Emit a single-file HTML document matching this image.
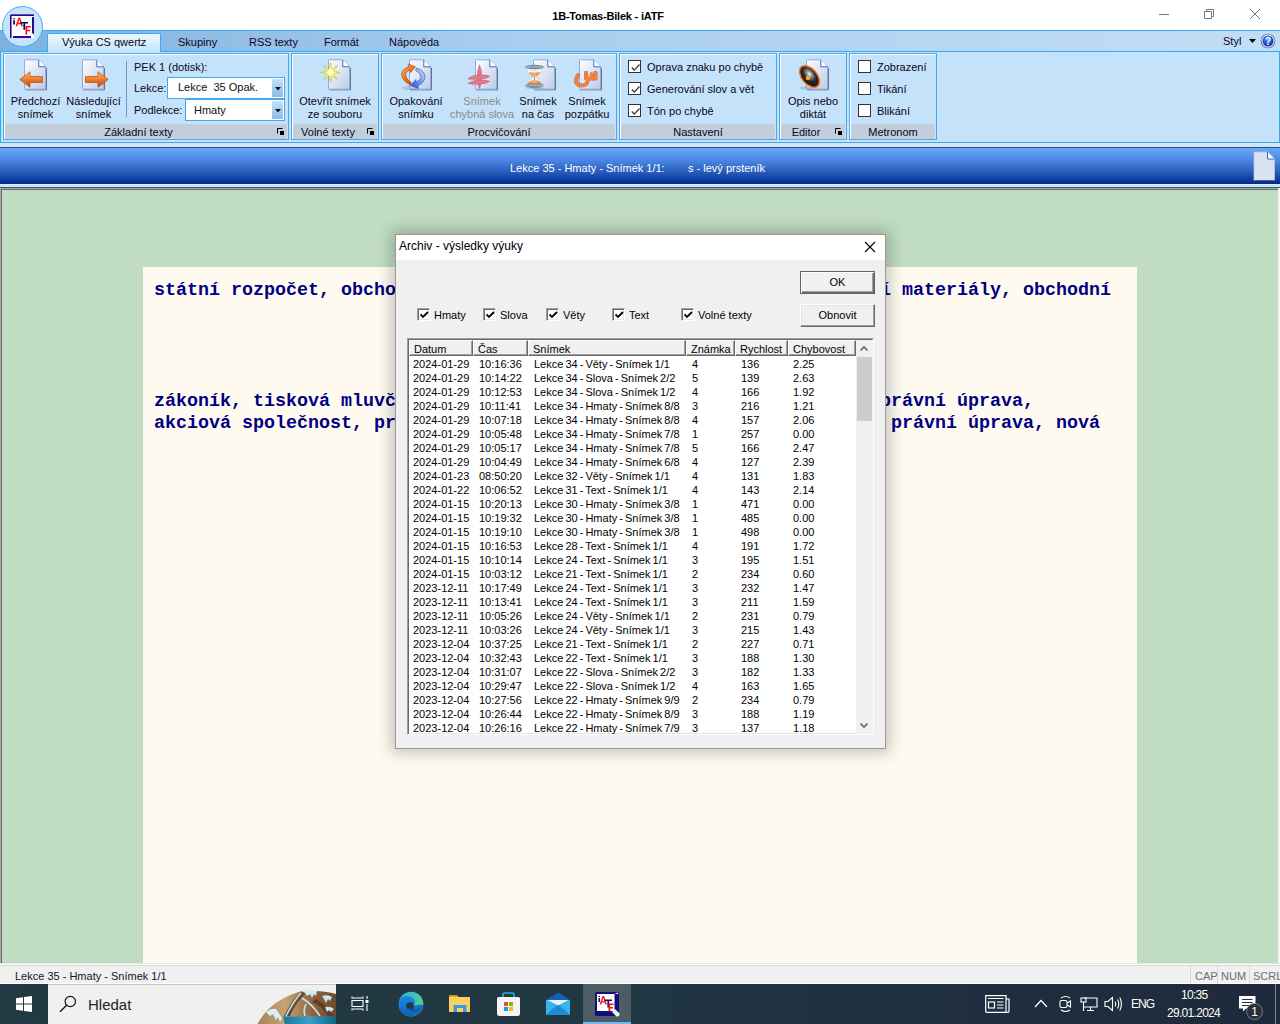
<!DOCTYPE html>
<html><head><meta charset="utf-8">
<style>
*{margin:0;padding:0;box-sizing:border-box}
html,body{width:1280px;height:1024px;overflow:hidden;background:#fff;font-family:"Liberation Sans",sans-serif;color:#1e1e1e}
.a{position:absolute}
.t{position:absolute;white-space:nowrap}
/* title bar */
#title{left:0;top:0;width:1280px;height:30px;background:#fff}
/* tab strip */
#tabs{left:0;top:30px;width:1280px;height:22px;background:linear-gradient(90deg,#7fb1df 0%,#a9cdee 40%,#c2def6 100%);border-top:1px solid #3aa6f5}
#ribbon{left:0;top:51px;width:1280px;height:92px;background:#c4e3fb}
.grp{position:absolute;top:53px;height:87px;border:1px solid #48a8ee;background:#c4e3fb;box-shadow:inset 1px 1px 0 #fff}
.glbl{position:absolute;left:1px;right:1px;bottom:0px;height:15px;background:#c2cedb;font-size:11px;text-align:center;line-height:14px;padding-top:1px;color:#0c0418}
.rt{position:absolute;white-space:nowrap;font-size:11px;color:#0c0418;text-align:center;line-height:13px}
/* blue bar */
#bbar{left:0;top:147px;width:1280px;height:37px;background:linear-gradient(#68a8fc,#4a86e0 35%,#2458b8 70%,#002a8a);border-top:1px solid #2e5270}
#main{left:0;top:188px;width:1278px;height:775px;background:#c0dcc2;border-top:1px solid #a8a4a4;border-left:1px solid #a8a8a8;box-shadow:inset 1px 1px 0 #6a6a6a}
#doc{left:143px;top:267px;width:994px;height:696px;background:#fffaf0}
.dt{position:absolute;white-space:pre;font-family:"Liberation Mono",monospace;font-weight:bold;font-size:18.33px;color:#000082;left:154px}
#status{left:0;top:963px;width:1280px;height:21px;background:linear-gradient(#e6e6e6 0,#e6e6e6 1px,#fff 1px,#fff 2px,#d8d8d8 2px,#d8d8d8 3px,#f0f0f0 3px,#f0f0f0 20px,#fff 20px)}
#taskbar{left:0;top:984px;width:1280px;height:40px;background:linear-gradient(90deg,#223843 0%,#213843 45%,#1f3040 70%,#1e2a3c 100%)}
/* dialog */
#dlg{left:395px;top:234px;width:491px;height:515px;background:#f0f0f0;border:1px solid #9c9890;box-shadow:0 0 14px 4px rgba(0,0,0,0.22)}
#dlgtitle{left:0;top:0;width:489px;height:26px;background:#fff}
.row{position:absolute;left:0;height:14px;width:1px}
.row span{position:absolute;top:0;font-size:11px;line-height:14px;color:#000;white-space:nowrap}
.btn{background:#f0f0f0;border-top:1px solid #fff;border-left:1px solid #fff;border-right:1px solid #696969;border-bottom:1px solid #696969;box-shadow:inset -1px -1px 0 #a0a0a0,inset 1px 1px 0 #e3e3e3}
.btn.def{border:1px solid #646464;box-shadow:inset 1px 1px 0 #fff,inset -1px -1px 0 #696969,inset -2px -2px 0 #a0a0a0}
.cb{width:13px;height:13px;background:#fff;border-top:1px solid #a0a0a0;border-left:1px solid #a0a0a0;border-right:1px solid #fff;border-bottom:1px solid #fff;box-shadow:inset 1px 1px 0 #696969,inset -1px -1px 0 #e3e3e3}
.dl{font-size:11px;line-height:13px;color:#000}
.hd{height:16px;background:#f0f0f0;border-top:1px solid #fff;border-left:1px solid #fff;border-right:1px solid #696969;border-bottom:1px solid #696969;box-shadow:inset -1px -1px 0 #a0a0a0;font-size:11px;line-height:14px;padding:1px 0 0 4px;color:#000;white-space:nowrap;overflow:hidden}
.tab{top:35px;font-size:11px;line-height:14px;color:#0c0418}
.rl{font-size:11px;line-height:13px;color:#0c0418}
.combo{background:#fff;border:1px solid #3ea9f4}
.cbtn{position:absolute;right:1px;top:1px;width:11px;height:18px;background:linear-gradient(#c4e0f8,#8dbbe6)}
.rcb{width:13px;height:13px;background:#fff;border:1px solid #333}
.sp{top:969px;font-size:11px;line-height:14px;color:#6d6d6d}
</style></head><body>
<div id="title" class="a"></div>
<div class="t" style="left:0;top:1px;width:1216px;text-align:center;font-size:11px;font-weight:bold;line-height:30px;color:#000;letter-spacing:-0.2px">1B-Tomas-Bilek - iATF</div>
<div id="tabs" class="a"></div>
<div class="a" style="left:1159px;top:14px;width:10px;height:1px;background:#777"></div>
<svg class="a" style="left:1203px;top:8px" width="12" height="12" viewBox="0 0 12 12"><path d="M1.5 3.5H8.5V10.5H1.5Z M3.5 3.5V1.5H10.5V8.5H8.5" fill="none" stroke="#777" stroke-width="1"/></svg>
<svg class="a" style="left:1249px;top:8px" width="12" height="12" viewBox="0 0 12 12"><path d="M1 1L11 11M11 1L1 11" stroke="#777" stroke-width="1"/></svg>
<div id="ribbon" class="a"></div>
<div class="a" style="left:0;top:51px;width:1280px;height:1px;background:#2eaaf8"></div>
<div class="a" style="left:0;top:51px;width:1px;height:92px;background:#2eaaf8"></div>
<div class="a" style="left:1279px;top:51px;width:1px;height:92px;background:#2eaaf8"></div>
<div class="a" style="left:0;top:142px;width:1280px;height:1px;background:#4aa5e6"></div>
<div class="a" style="left:0;top:143px;width:1280px;height:4px;background:#cfe6f8"></div>
<!-- tab strip bits -->
<div class="a" style="left:47px;top:33px;width:114px;height:19px;background:linear-gradient(#e9f8ff,#c6e4fa);border:1px solid #3ea9f4;border-bottom:none;border-radius:2px 2px 0 0"></div>
<div class="t tab" style="left:62px">Výuka CS qwertz</div>
<div class="t tab" style="left:178px">Skupiny</div>
<div class="t tab" style="left:249px">RSS texty</div>
<div class="t tab" style="left:324px">Formát</div>
<div class="t tab" style="left:389px">Nápověda</div>
<div class="t tab" style="left:1223px;top:34px">Styl</div>
<svg class="a" style="left:1249px;top:39px" width="7" height="4" viewBox="0 0 7 4"><path d="M0 0H7L3.5 4Z" fill="#000"/></svg>
<svg class="a" style="left:1260px;top:33px" width="16" height="16" viewBox="0 0 16 16"><defs><radialGradient id="hg" cx="0.45" cy="0.35" r="0.7"><stop offset="0" stop-color="#5a9aff"/><stop offset="0.6" stop-color="#1a50d0"/><stop offset="1" stop-color="#0a2a90"/></radialGradient></defs><circle cx="8" cy="8" r="7.3" fill="#4a6aa8"/><circle cx="8" cy="8" r="6.5" fill="#fff"/><circle cx="8" cy="8" r="5.6" fill="url(#hg)"/><text x="8" y="12" font-size="10" font-weight="bold" text-anchor="middle" fill="#fff" font-family="Liberation Sans">?</text></svg>
<!-- app button -->
<div class="a" style="left:2px;top:6px;width:41px;height:41px;border-radius:50%;background:#c6e4fb;border:1.6px solid #40aff5"></div>
<svg class="a" style="left:10px;top:14px" width="25" height="25" viewBox="0 0 25 25"><rect x="0.5" y="0.5" width="23.5" height="23.5" fill="#fff"/><path d="M1 0.3H24V2H1Z" fill="#2a0a8a"/><path d="M0 0.8H1.6V24H0Z" fill="#2a0a8a"/><path d="M22 3H24V20.5L22 19Z" fill="#2a0a8a"/><path d="M3 22H21V24H3Z" fill="#2a0a8a"/>
<path d="M3.2 4.2H5V5.2H3.2Z M3.2 6.2H5V10.5H3.2Z" fill="#10085a"/>
<path d="M5.5 12.2L8.5 3.5H10L13 12.2H11.3L10.6 10.2H7.8L7.2 12.2Z M8.2 8.8H10.2L9.2 5.6Z" fill="#ff1010"/>
<path d="M10.5 8H18V9.5H15.2V15.8H13.4V9.5H10.5Z" fill="#10085a"/>
<path d="M15.5 12H20.8V13.5H17.2V15.8H20.2V17.2H17.2V20.8H15.5Z" fill="#ff1010"/></svg>
<!-- groups -->
<div class="grp" style="left:3px;width:286px"><div class="glbl" style="padding-right:15px">Základní texty</div></div>
<div class="grp" style="left:291px;width:88px"><div class="glbl" style="padding-right:14px">Volné texty</div></div>
<div class="grp" style="left:381px;width:236px"><div class="glbl">Procvičování</div></div>
<div class="grp" style="left:619px;width:158px"><div class="glbl">Nastavení</div></div>
<div class="grp" style="left:779px;width:68px"><div class="glbl" style="padding-right:14px">Editor</div></div>
<div class="grp" style="left:849px;width:88px"><div class="glbl">Metronom</div></div>
<!-- dialog launchers -->
<svg class="a dlch" style="left:276px;top:127px" width="9" height="9" viewBox="0 0 9 9"><path d="M1.5 6.5V1.5H6.5" stroke="#000" stroke-width="1" fill="none"/><path d="M4 4L8 4V8H4Z" fill="#000"/></svg>
<svg class="a dlch" style="left:366px;top:127px" width="9" height="9" viewBox="0 0 9 9"><path d="M1.5 6.5V1.5H6.5" stroke="#000" stroke-width="1" fill="none"/><path d="M4 4L8 4V8H4Z" fill="#000"/></svg>
<svg class="a dlch" style="left:834px;top:127px" width="9" height="9" viewBox="0 0 9 9"><path d="M1.5 6.5V1.5H6.5" stroke="#000" stroke-width="1" fill="none"/><path d="M4 4L8 4V8H4Z" fill="#000"/></svg>
<!-- G1 -->
<svg class="a" style="left:24px;top:59px" width="24" height="32" viewBox="0 0 24 32"><defs><linearGradient id="pg24" x1="0" y1="0" x2="1" y2="1"><stop offset="0" stop-color="#ffffff"/><stop offset="1" stop-color="#bccbe6"/></linearGradient></defs><path d="M1 30.8H22.5V9" stroke="#404a68" stroke-width="1" fill="none" opacity="0.75"/><path d="M0.5 1.5Q0.5 0.8 1.2 0.8H14.8L21.6 7.8V29.5Q21.6 30.2 21 30.2H1.2Q0.5 30.2 0.5 29.5Z" fill="url(#pg24)" stroke="#86a4d8" stroke-width="0.9"/><path d="M14.8 0.8V7.8H21.6Z" fill="#fff"/><path d="M14.8 1V7.8H21.6" fill="none" stroke="#3a6ad0" stroke-width="1"/></svg><svg class="a" style="left:82px;top:59px" width="24" height="32" viewBox="0 0 24 32"><defs><linearGradient id="pg82" x1="0" y1="0" x2="1" y2="1"><stop offset="0" stop-color="#ffffff"/><stop offset="1" stop-color="#bccbe6"/></linearGradient></defs><path d="M1 30.8H22.5V9" stroke="#404a68" stroke-width="1" fill="none" opacity="0.75"/><path d="M0.5 1.5Q0.5 0.8 1.2 0.8H14.8L21.6 7.8V29.5Q21.6 30.2 21 30.2H1.2Q0.5 30.2 0.5 29.5Z" fill="url(#pg82)" stroke="#86a4d8" stroke-width="0.9"/><path d="M14.8 0.8V7.8H21.6Z" fill="#fff"/><path d="M14.8 1V7.8H21.6" fill="none" stroke="#3a6ad0" stroke-width="1"/></svg>
<svg class="a" style="left:19px;top:71px" width="25" height="17" viewBox="0 0 25 17"><defs><linearGradient id="ar1" x1="0" y1="0" x2="0" y2="1"><stop offset="0" stop-color="#ffc070"/><stop offset="0.5" stop-color="#f07a2a"/><stop offset="1" stop-color="#c64a10"/></linearGradient></defs><path d="M0.8 8.5L11 0.8V5.5H23.5V11.5H11V16.2Z" fill="url(#ar1)" stroke="#b04808" stroke-width="0.7"/></svg>
<svg class="a" style="left:84px;top:71px" width="25" height="17" viewBox="0 0 25 17"><path d="M24.2 8.5L14 0.8V5.5H1.5V11.5H14V16.2Z" fill="url(#ar1)" stroke="#b04808" stroke-width="0.7"/></svg>
<div class="rt" style="left:5px;top:95px;width:61px">Předchozí<br>snímek</div>
<div class="rt" style="left:63px;top:95px;width:61px">Následující<br>snímek</div>
<div class="a" style="left:126px;top:61px;width:1px;height:56px;background:#6e9ac4"></div>
<div class="t rl" style="left:134px;top:61px">PEK 1 (dotisk):</div>
<div class="t rl" style="left:134px;top:82px">Lekce:</div>
<div class="t rl" style="left:134px;top:104px">Podlekce:</div>
<div class="a combo" style="left:167px;top:77px;width:118px;height:22px"><div class="t" style="left:10px;top:3px;font-size:11px;line-height:13px;color:#111">Lekce&nbsp; 35 Opak.</div><div class="cbtn"><svg class="a" style="left:3px;top:8px" width="6" height="4" viewBox="0 0 6 4"><path d="M0 0H6L3 3.5Z" fill="#111"/></svg></div></div>
<div class="a combo" style="left:185px;top:99px;width:100px;height:22px"><div class="t" style="left:8px;top:4px;font-size:11px;line-height:13px;color:#111">Hmaty</div><div class="cbtn"><svg class="a" style="left:3px;top:8px" width="6" height="4" viewBox="0 0 6 4"><path d="M0 0H6L3 3.5Z" fill="#111"/></svg></div></div>
<!-- G2 -->
<svg class="a" style="left:328px;top:59px" width="24" height="32" viewBox="0 0 24 32"><defs><linearGradient id="pg328" x1="0" y1="0" x2="1" y2="1"><stop offset="0" stop-color="#ffffff"/><stop offset="1" stop-color="#bccbe6"/></linearGradient></defs><path d="M1 30.8H22.5V9" stroke="#404a68" stroke-width="1" fill="none" opacity="0.75"/><path d="M0.5 1.5Q0.5 0.8 1.2 0.8H14.8L21.6 7.8V29.5Q21.6 30.2 21 30.2H1.2Q0.5 30.2 0.5 29.5Z" fill="url(#pg328)" stroke="#86a4d8" stroke-width="0.9"/><path d="M14.8 0.8V7.8H21.6Z" fill="#fff"/><path d="M14.8 1V7.8H21.6" fill="none" stroke="#3a6ad0" stroke-width="1"/></svg>
<svg class="a" style="left:320px;top:62px" width="21" height="21" viewBox="0 0 21 21"><defs><radialGradient id="st"><stop offset="0" stop-color="#fff"/><stop offset="0.3" stop-color="#ffffa0"/><stop offset="1" stop-color="#e0d000"/></radialGradient></defs><path d="M10.5 0.5L12 7.5L17.6 3.4L13.5 9L20.5 10.5L13.5 12L17.6 17.6L12 13.5L10.5 20.5L9 13.5L3.4 17.6L7.5 12L0.5 10.5L7.5 9L3.4 3.4L9 7.5Z" fill="url(#st)" stroke="#c8b000" stroke-width="0.4"/></svg>
<div class="rt" style="left:291px;top:95px;width:88px">Otevřít snímek<br>ze souboru</div>
<!-- G3 -->
<svg class="a" style="left:409px;top:59px" width="24" height="32" viewBox="0 0 24 32"><defs><linearGradient id="pg409" x1="0" y1="0" x2="1" y2="1"><stop offset="0" stop-color="#ffffff"/><stop offset="1" stop-color="#bccbe6"/></linearGradient></defs><path d="M1 30.8H22.5V9" stroke="#404a68" stroke-width="1" fill="none" opacity="0.75"/><path d="M0.5 1.5Q0.5 0.8 1.2 0.8H14.8L21.6 7.8V29.5Q21.6 30.2 21 30.2H1.2Q0.5 30.2 0.5 29.5Z" fill="url(#pg409)" stroke="#86a4d8" stroke-width="0.9"/><path d="M14.8 0.8V7.8H21.6Z" fill="#fff"/><path d="M14.8 1V7.8H21.6" fill="none" stroke="#3a6ad0" stroke-width="1"/></svg><svg class="a" style="left:475px;top:59px" width="24" height="32" viewBox="0 0 24 32"><defs><linearGradient id="pg475" x1="0" y1="0" x2="1" y2="1"><stop offset="0" stop-color="#ffffff"/><stop offset="1" stop-color="#bccbe6"/></linearGradient></defs><path d="M1 30.8H22.5V9" stroke="#404a68" stroke-width="1" fill="none" opacity="0.75"/><path d="M0.5 1.5Q0.5 0.8 1.2 0.8H14.8L21.6 7.8V29.5Q21.6 30.2 21 30.2H1.2Q0.5 30.2 0.5 29.5Z" fill="url(#pg475)" stroke="#86a4d8" stroke-width="0.9"/><path d="M14.8 0.8V7.8H21.6Z" fill="#fff"/><path d="M14.8 1V7.8H21.6" fill="none" stroke="#3a6ad0" stroke-width="1"/></svg><svg class="a" style="left:533px;top:59px" width="24" height="32" viewBox="0 0 24 32"><defs><linearGradient id="pg533" x1="0" y1="0" x2="1" y2="1"><stop offset="0" stop-color="#ffffff"/><stop offset="1" stop-color="#bccbe6"/></linearGradient></defs><path d="M1 30.8H22.5V9" stroke="#404a68" stroke-width="1" fill="none" opacity="0.75"/><path d="M0.5 1.5Q0.5 0.8 1.2 0.8H14.8L21.6 7.8V29.5Q21.6 30.2 21 30.2H1.2Q0.5 30.2 0.5 29.5Z" fill="url(#pg533)" stroke="#86a4d8" stroke-width="0.9"/><path d="M14.8 0.8V7.8H21.6Z" fill="#fff"/><path d="M14.8 1V7.8H21.6" fill="none" stroke="#3a6ad0" stroke-width="1"/></svg><svg class="a" style="left:579px;top:59px" width="24" height="32" viewBox="0 0 24 32"><defs><linearGradient id="pg579" x1="0" y1="0" x2="1" y2="1"><stop offset="0" stop-color="#ffffff"/><stop offset="1" stop-color="#bccbe6"/></linearGradient></defs><path d="M1 30.8H22.5V9" stroke="#404a68" stroke-width="1" fill="none" opacity="0.75"/><path d="M0.5 1.5Q0.5 0.8 1.2 0.8H14.8L21.6 7.8V29.5Q21.6 30.2 21 30.2H1.2Q0.5 30.2 0.5 29.5Z" fill="url(#pg579)" stroke="#86a4d8" stroke-width="0.9"/><path d="M14.8 0.8V7.8H21.6Z" fill="#fff"/><path d="M14.8 1V7.8H21.6" fill="none" stroke="#3a6ad0" stroke-width="1"/></svg>
<svg class="a" style="left:400px;top:63px" width="28" height="28" viewBox="0 0 28 28"><defs><linearGradient id="ro" x1="0" y1="0" x2="1" y2="1"><stop offset="0" stop-color="#ffb860"/><stop offset="0.5" stop-color="#f07020"/><stop offset="1" stop-color="#b83c00"/></linearGradient><linearGradient id="rb" x1="1" y1="0" x2="0" y2="1"><stop offset="0" stop-color="#d0e0ff"/><stop offset="0.5" stop-color="#7098f0"/><stop offset="1" stop-color="#2850d0"/></linearGradient></defs><ellipse cx="10" cy="25" rx="8" ry="2" fill="#000" opacity="0.12"/><path d="M10.5 22Q2 18 1.5 11.5Q2 5.5 8.5 4L8 0.8L15.5 3.8L10.5 9.8L10 7.2Q5.5 8.5 5.8 12Q6.5 17 11.5 19.5Z" fill="url(#ro)" stroke="#983800" stroke-width="0.5"/><path d="M16.5 5Q24.5 7.5 25 13.5Q24.5 20 18 22.5L18.5 25.5L10.5 22.5L15.8 16.5L16.2 19Q20.8 17.2 20.8 13.5Q20.5 9.5 15.5 7.5Z" fill="url(#rb)" stroke="#1838a8" stroke-width="0.5"/></svg>
<svg class="a" style="left:467px;top:64px" width="24" height="25" viewBox="0 0 24 25"><g fill="#e57a8a" stroke="#c45a6c" stroke-width="0.6"><path d="M12.5 0.8Q15 7 14.6 13Q15 19 12.5 24.5Q10 19 10.4 13Q10 7 12.5 0.8Z"/><path d="M0.8 15Q4 11.5 12 11.2Q19 10.5 22.5 12.2Q20 15 12 15Q5 15.5 0.8 15Z"/><path d="M1 19.5Q5 16.5 12 16.2Q19 15.8 22.5 17.5Q19 20 12 20Q5 20.5 1 19.5Z"/></g></svg>
<svg class="a" style="left:524px;top:64px" width="22" height="25" viewBox="0 0 22 25"><defs><linearGradient id="hgc" x1="0" y1="0" x2="0" y2="1"><stop offset="0" stop-color="#5c7a98"/><stop offset="0.5" stop-color="#a8b4c0"/><stop offset="1" stop-color="#4a6a88"/></linearGradient><linearGradient id="snd" x1="0" y1="0" x2="1" y2="0"><stop offset="0" stop-color="#e87030"/><stop offset="0.5" stop-color="#ffb070"/><stop offset="1" stop-color="#e06020"/></linearGradient></defs><ellipse cx="10.5" cy="24" rx="9" ry="1" fill="#000" opacity="0.15"/><path d="M2.5 4Q3 10 9.5 13Q3 16 2.5 21H18.5Q18 16 11.5 13Q18 10 18.5 4Z" fill="#eef2f6" stroke="#b0bac4" stroke-width="0.5"/><path d="M5 8.5Q7 12 10.5 13.2Q14 12 16 8.5Z" fill="url(#snd)"/><path d="M10 13V17H11V13Z" fill="#f08040"/><path d="M3 21Q4.5 16.5 10.5 16Q16.5 16.5 18 21Z" fill="url(#snd)"/><ellipse cx="10.5" cy="3" rx="10" ry="2.2" fill="url(#hgc)"/><ellipse cx="10.5" cy="21.5" rx="10" ry="2" fill="url(#hgc)"/></svg>
<svg class="a" style="left:572px;top:69px" width="28" height="20" viewBox="572 69 28 20"><path d="M578 75.2Q575.2 79.5 576.3 82.8Q578 85.8 582.8 85.4Q587.8 84.8 588 79 M586 72.8V78.6H591.6V74.2 M591.6 78.6H595.6V72.8" fill="none" stroke="#7a3000" stroke-width="4" stroke-linejoin="round" stroke-linecap="round" opacity="0.55"/><path d="M578 75.2Q575.2 79.5 576.3 82.8Q578 85.8 582.8 85.4Q587.8 84.8 588 79 M586 72.8V78.6H591.6V74.2 M591.6 78.6H595.6V72.8" fill="none" stroke="#f8803a" stroke-width="3" stroke-linejoin="round" stroke-linecap="square"/></svg>
<div class="rt" style="left:382px;top:95px;width:68px">Opakování<br>snímku</div>
<div class="rt" style="left:446px;top:95px;width:72px;color:#8a8a8a">Snímek<br>chybná slova</div>
<div class="rt" style="left:513px;top:95px;width:50px">Snímek<br>na čas</div>
<div class="rt" style="left:560px;top:95px;width:54px">Snímek<br>pozpátku</div>
<!-- G4 -->
<div class="a rcb" style="left:628px;top:60px"><svg class="a" style="left:1px;top:1px" width="11" height="11" viewBox="0 0 11 11"><path d="M1.8 5.5L4.3 8.2L9.5 2.5" stroke="#333" stroke-width="1.2" fill="none"/></svg></div><div class="t rl" style="left:647px;top:61px">Oprava znaku po chybě</div>
<div class="a rcb" style="left:628px;top:82px"><svg class="a" style="left:1px;top:1px" width="11" height="11" viewBox="0 0 11 11"><path d="M1.8 5.5L4.3 8.2L9.5 2.5" stroke="#333" stroke-width="1.2" fill="none"/></svg></div><div class="t rl" style="left:647px;top:83px">Generování slov a vět</div>
<div class="a rcb" style="left:628px;top:104px"><svg class="a" style="left:1px;top:1px" width="11" height="11" viewBox="0 0 11 11"><path d="M1.8 5.5L4.3 8.2L9.5 2.5" stroke="#333" stroke-width="1.2" fill="none"/></svg></div><div class="t rl" style="left:647px;top:105px">Tón po chybě</div>
<!-- G5 -->
<svg class="a" style="left:806px;top:59px" width="24" height="32" viewBox="0 0 24 32"><defs><linearGradient id="pg806" x1="0" y1="0" x2="1" y2="1"><stop offset="0" stop-color="#ffffff"/><stop offset="1" stop-color="#bccbe6"/></linearGradient></defs><path d="M1 30.8H22.5V9" stroke="#404a68" stroke-width="1" fill="none" opacity="0.75"/><path d="M0.5 1.5Q0.5 0.8 1.2 0.8H14.8L21.6 7.8V29.5Q21.6 30.2 21 30.2H1.2Q0.5 30.2 0.5 29.5Z" fill="url(#pg806)" stroke="#86a4d8" stroke-width="0.9"/><path d="M14.8 0.8V7.8H21.6Z" fill="#fff"/><path d="M14.8 1V7.8H21.6" fill="none" stroke="#3a6ad0" stroke-width="1"/></svg>
<svg class="a" style="left:796px;top:62px" width="26" height="29" viewBox="0 0 26 29"><defs><radialGradient id="spk" cx="0.6" cy="0.42" r="0.55"><stop offset="0" stop-color="#fff"/><stop offset="0.25" stop-color="#909090"/><stop offset="0.6" stop-color="#2a2a2a"/><stop offset="1" stop-color="#181818"/></radialGradient></defs><ellipse cx="11" cy="26" rx="8" ry="1.8" fill="#000" opacity="0.12"/><ellipse cx="13.5" cy="14.5" rx="7.6" ry="12.6" transform="rotate(-40 13.5 14.5)" fill="url(#spk)" stroke="#f07818" stroke-width="1.5"/><circle cx="12" cy="16" r="2.3" fill="#ffa030"/></svg>
<div class="rt" style="left:779px;top:95px;width:68px">Opis nebo<br>diktát</div>
<!-- G6 -->
<div class="a rcb" style="left:858px;top:60px"></div><div class="t rl" style="left:877px;top:61px">Zobrazení</div>
<div class="a rcb" style="left:858px;top:82px"></div><div class="t rl" style="left:877px;top:83px">Tikání</div>
<div class="a rcb" style="left:858px;top:104px"></div><div class="t rl" style="left:877px;top:105px">Blikání</div>

<div id="bbar" class="a"></div>
<div class="t" style="left:510px;top:161px;font-size:11px;line-height:14px;color:#fff">Lekce 35 - Hmaty - Snímek 1/1:</div>
<div class="t" style="left:688px;top:161px;font-size:11px;line-height:14px;color:#fff">s - levý prsteník</div>
<svg class="a" style="left:1253px;top:151px" width="23" height="31" viewBox="0 0 23 31"><path d="M1 1H14.5L21.5 8V29.5H1Z" fill="#d8e2f0" stroke="#b8c8e0" stroke-width="0.8"/><path d="M14.5 1V8H21.5Z" fill="#fff"/><path d="M14.5 1V8H21.5" fill="none" stroke="#3a68c0" stroke-width="1"/><path d="M1.5 30H21.5" stroke="#0c2c70" stroke-width="1.2"/></svg>
<div class="a" style="left:0;top:184px;width:1280px;height:3px;background:linear-gradient(#dcf4ff,#c5e4fa 50%,#c8e8fc)"></div>
<div class="a" style="left:0;top:187px;width:1280px;height:1px;background:#3a5a72"></div>
<div id="main" class="a"></div>
<div class="a" style="left:1278px;top:188px;width:2px;height:775px;background:#f4f4f4"></div>
<div id="doc" class="a"></div>
<div class="dt" style="top:280px">státní rozpočet, obchodní tisková mluvčí, obchodní rejstřík, účetní materiály, obchodní</div>
<div class="dt" style="top:391px">zákoník, tisková mluvčí, propagační materiály, obchodní rejstřík, právní úprava,</div>
<div class="dt" style="top:413px">akciová společnost, propagační materiály, obchodní rejstříky, nová právní úprava, nová</div>
<div id="status" class="a"></div>
<div class="t" style="left:15px;top:969px;font-size:11px;line-height:14px;color:#1a1028">Lekce 35 - Hmaty - Snímek 1/1</div>
<div class="a" style="left:1190px;top:966px;width:1px;height:18px;background:#d8d8d8"></div>
<div class="a" style="left:1217px;top:966px;width:1px;height:18px;background:#d8d8d8"></div>
<div class="a" style="left:1249px;top:966px;width:1px;height:18px;background:#d8d8d8"></div>
<div class="t sp" style="left:1195px">CAP</div>
<div class="t sp" style="left:1221px">NUM</div>
<div class="t sp" style="left:1253px">SCRL</div>
<div id="taskbar" class="a"></div>
<svg class="a" style="left:15px;top:995px" width="18" height="18" viewBox="0 0 18 18"><path d="M1 3.2L8 2.2V8.4H1Z M9 2.1L17 1V8.4H9Z M1 9.6H8V15.8L1 14.8Z M9 9.6H17V17L9 15.9Z" fill="#fff"/></svg>
<div class="a" style="left:48px;top:984px;width:288px;height:40px;background:#f0f0f0;border-top:1px solid #c6c6c6"></div>
<svg class="a" style="left:58px;top:994px" width="20" height="20" viewBox="0 0 20 20"><circle cx="12.3" cy="7.5" r="5.2" fill="none" stroke="#111" stroke-width="1.2"/><path d="M8.6 11.2L2 17.8" stroke="#111" stroke-width="1.3"/></svg>
<div class="t" style="left:88px;top:996px;font-size:15px;line-height:18px;color:#222">Hledat</div>
<svg class="a" style="left:256px;top:989px" width="80" height="35" viewBox="256 989 80 35"><defs><linearGradient id="mt" x1="0" y1="0" x2="1" y2="0"><stop offset="0" stop-color="#a8845a"/><stop offset="0.35" stop-color="#c4a470"/><stop offset="0.7" stop-color="#8e6440"/><stop offset="1" stop-color="#6e4a2c"/></linearGradient><linearGradient id="wt" x1="0" y1="0" x2="1" y2="0"><stop offset="0" stop-color="#1878a0"/><stop offset="0.5" stop-color="#3aa0c4"/><stop offset="1" stop-color="#10648a"/></linearGradient></defs>
<path d="M257.5 1024Q270 1000 302 991Q320 990 336 994V1024Z" fill="url(#mt)"/>
<path d="M284 1016Q292 1000 302 991L306 993Q296 1002 290 1016Z" fill="#6a4830"/>
<path d="M316 999Q326 1004 334 1016H328Q322 1006 312 1002Z" fill="#5e3e26"/>
<path d="M286 1016Q293 1002 301 993M302 998Q312 1004 320 1016M306 1004Q303 1010 305 1016" stroke="#bfe6ef" stroke-width="1.6" fill="none"/>
<path d="M301 991Q310 988 317 991L316 996L314 994L312 998L310 994L307 996L305 993Z" fill="#d0ecf8"/>
<path d="M322 996Q328 994 332 997L330 1001L328 999L326 1003L324 999Z" fill="#c8e6f6"/>
<path d="M325 1007Q330 1006 334 1009L331 1012L329 1010L327 1012Z" fill="#c8e6f6"/>
<path d="M266 1012Q271 1008 276 1009L282 1018L280 1022L278 1017L276 1020L273 1014L270 1016Z" fill="#d8f0fa"/>
<path d="M283 1016.5H336V1024H285Z" fill="url(#wt)"/></svg>
<!-- task view -->
<svg class="a" style="left:351px;top:995px" width="18" height="17" viewBox="0 0 18 17"><g fill="none" stroke="#fff" stroke-width="1.1"><path d="M1 1.5V3H12V1.5M1 15.5V14H12V15.5M1 5.5H12V11.5H1Z"/><path d="M16 1V4M16 9V16"/></g><rect x="14.5" y="5" width="3" height="3" fill="#fff"/></svg>
<!-- edge -->
<svg class="a" style="left:398px;top:991px" width="26" height="26" viewBox="0 0 26 26"><defs><linearGradient id="eg1" x1="0" y1="0" x2="1" y2="1"><stop offset="0" stop-color="#2fb0e8"/><stop offset="1" stop-color="#5fd86a"/></linearGradient><linearGradient id="eg2" x1="0" y1="0" x2="0" y2="1"><stop offset="0" stop-color="#1c8ae0"/><stop offset="1" stop-color="#0e62b8"/></linearGradient></defs><circle cx="13" cy="13" r="12.3" fill="url(#eg1)"/><path d="M0.8 13Q0.8 6 8 5Q14 4.5 16.5 9Q18 12.5 15.5 14Q19 14.5 23 13.5Q25.5 13 25 16Q23 23 16 25Q8 26.5 3.5 21Q0.8 18 0.8 13Z" fill="url(#eg2)"/><circle cx="12" cy="15" r="3.8" fill="#223845"/><path d="M9 17Q12 22 18 21Q22 20 24.5 16Q20 19 15 18Z" fill="#1058a8"/></svg>
<!-- explorer -->
<svg class="a" style="left:449px;top:995px" width="22" height="18" viewBox="0 0 22 18"><path d="M0 1.5Q0 0.5 1 0.5H8L9.5 2H21V17H0Z" fill="#fcd060"/><path d="M0 0.5H8L9.5 2H0Z" fill="#e8a820"/><path d="M4.5 17V10H17.5V17H14V13H8V17Z" fill="#3a98e8"/></svg>
<!-- store -->
<svg class="a" style="left:496px;top:992px" width="25" height="25" viewBox="0 0 25 25"><path d="M7 6V2.5Q7 1 8.5 1H16.5Q18 1 18 2.5V6" fill="none" stroke="#30a8e8" stroke-width="1.6"/><path d="M1 6.5Q1 5 2.5 5H22.5Q24 5 24 6.5V21.5Q24 24 21.5 24H3.5Q1 24 1 21.5Z" fill="#f4f4f4"/><rect x="8" y="10" width="4" height="4" fill="#f25022"/><rect x="13" y="10" width="4" height="4" fill="#7fba00"/><rect x="8" y="15" width="4" height="4" fill="#00a4ef"/><rect x="13" y="15" width="4" height="4" fill="#ffb900"/></svg>
<!-- mail -->
<svg class="a" style="left:546px;top:992px" width="24" height="24" viewBox="0 0 24 24"><path d="M0 8L12 0.5L24 8V23H0Z" fill="#0b64b8"/><path d="M0 8H24V23H0Z" fill="#36b4ee"/><path d="M0 23L12 12L24 23Z" fill="#1e8ad8"/><path d="M1.5 8H22.5L12 13.5Z" fill="#f0f0f0"/></svg>
<!-- active app -->
<div class="a" style="left:583px;top:984px;width:48px;height:40px;background:#4d5c65"></div>
<div class="a" style="left:583px;top:1022px;width:48px;height:2px;background:#76b9ed"></div>
<svg class="a" style="left:595px;top:992px" width="25" height="25" viewBox="0 0 25 25"><rect x="0" y="0" width="24" height="24" rx="1.5" fill="#10107a"/><rect x="2" y="2" width="17.5" height="17" fill="#fff"/><path d="M19.5 2L23 0.5V2Z" fill="#fff"/><path d="M17 20L21.5 24.5L24.5 21.5L20 17Z" fill="#f0f0f0"/><circle cx="22.5" cy="22.5" r="2" fill="#fff"/>
<path d="M3.5 4H5V5H3.5Z M3.5 6H5V10H3.5Z" fill="#10107a"/>
<path d="M4.5 12.5L7.5 4H9L12 12.5H10.4L9.8 10.5H6.8L6.2 12.5Z M7.2 9.2H9.4L8.3 6Z" fill="#ff1010"/>
<path d="M9.5 7.5H17V9H14.2V15.5H12.4V9H9.5Z" fill="#10107a"/>
<path d="M13.5 11.5H18.5V13H15.2V15H18V16.4H15.2V19.5H13.5Z" fill="#ff1010"/></svg>
<!-- tray -->
<svg class="a" style="left:985px;top:995px" width="25" height="18" viewBox="0 0 25 18"><g fill="none" stroke="#fff" stroke-width="1.2"><path d="M0.7 0.7H21V16.3Q21 17.3 20 17.3H1.7Q0.7 17.3 0.7 16.3Z"/><path d="M21 4H24V16.3Q24 17.3 23 17.3H20"/><rect x="3.5" y="7" width="6" height="6"/><path d="M3 3.5H18.5M12 7H18.5M12 10H18.5M12 13H18.5"/></g></svg>
<svg class="a" style="left:1034px;top:999px" width="14" height="9" viewBox="0 0 14 9"><path d="M1 8L7 1.5L13 8" fill="none" stroke="#fff" stroke-width="1.2"/></svg>
<svg class="a" style="left:1059px;top:995px" width="13" height="18" viewBox="0 0 13 18"><g fill="none" stroke="#fff" stroke-width="1.1"><path d="M2 3Q6.5 0 11 3M2 15Q6.5 18 11 15"/><rect x="1" y="5.5" width="7" height="7" rx="1.5"/><path d="M8 8L11.5 6V12L8 10"/></g></svg>
<svg class="a" style="left:1080px;top:997px" width="18" height="15" viewBox="0 0 18 15"><g fill="none" stroke="#fff" stroke-width="1.1"><path d="M4 1H17V10H4"/><path d="M10.5 10V13M7 13.5H14"/><rect x="1" y="1" width="5" height="4"/><path d="M3.5 5V14"/></g></svg>
<svg class="a" style="left:1104px;top:996px" width="18" height="16" viewBox="0 0 18 16"><g fill="none" stroke="#fff" stroke-width="1.1"><path d="M1 5.5H4L8.5 1.5V14.5L4 10.5H1Z"/><path d="M11 5.5Q12.5 8 11 10.5M13.5 3.5Q16 8 13.5 12.5M15.8 1.5Q19 8 15.8 14.5"/></g></svg>
<div class="t" style="left:1131px;top:997px;font-size:12px;line-height:14px;color:#fff;letter-spacing:-1px">ENG</div>
<div class="t" style="left:1181px;top:988px;font-size:12px;line-height:14px;color:#fff;letter-spacing:-0.7px">10:35</div>
<div class="t" style="left:1167px;top:1006px;font-size:12px;line-height:14px;color:#fff;letter-spacing:-0.7px">29.01.2024</div>
<svg class="a" style="left:1238px;top:995px" width="28" height="26" viewBox="0 0 28 26"><path d="M1 1H17.5V13.5H8L5 16.5V13.5H1Z" fill="#fff"/><path d="M4 4.5H14.5M4 7.5H14.5M4 10.5H11" stroke="#1e2a3b" stroke-width="1"/><circle cx="16.5" cy="16.5" r="8" fill="#2a2f36" stroke="#8a9098" stroke-width="0.8"/><text x="16.5" y="20.8" font-size="12" fill="#fff" text-anchor="middle" font-family="Liberation Sans">1</text></svg>
<div class="a" style="left:1275px;top:984px;width:1px;height:40px;background:#7a8490"></div>
<div id="dlg" class="a"></div>
<div class="a" style="left:396px;top:235px;width:489px;height:25px;background:#fff"></div>
<div class="t" style="left:399px;top:239px;font-size:12px;line-height:15px;color:#000">Archiv - výsledky výuky</div>
<svg class="a" style="left:864px;top:241px" width="12" height="12" viewBox="0 0 12 12"><path d="M1 1L11 11M11 1L1 11" stroke="#000" stroke-width="1.1"/></svg>
<!-- buttons -->
<div class="a btn def" style="left:800px;top:271px;width:75px;height:23px"></div>
<div class="t" style="left:800px;top:275px;width:75px;text-align:center;font-size:11px;line-height:14px;color:#000">OK</div>
<div class="a btn" style="left:800px;top:304px;width:75px;height:23px"></div>
<div class="t" style="left:800px;top:308px;width:75px;text-align:center;font-size:11px;line-height:14px;color:#000">Obnovit</div>
<!-- checkboxes -->
<div class="a cb" style="left:417px;top:308px"><svg class="a" style="left:2px;top:2px" width="9" height="9" viewBox="0 0 9 9"><path d="M0.5 3.5L3 6L8 1" stroke="#000" stroke-width="1.8" fill="none"/></svg></div><div class="t dl" style="left:434px;top:309px">Hmaty</div>
<div class="a cb" style="left:483px;top:308px"><svg class="a" style="left:2px;top:2px" width="9" height="9" viewBox="0 0 9 9"><path d="M0.5 3.5L3 6L8 1" stroke="#000" stroke-width="1.8" fill="none"/></svg></div><div class="t dl" style="left:500px;top:309px">Slova</div>
<div class="a cb" style="left:546px;top:308px"><svg class="a" style="left:2px;top:2px" width="9" height="9" viewBox="0 0 9 9"><path d="M0.5 3.5L3 6L8 1" stroke="#000" stroke-width="1.8" fill="none"/></svg></div><div class="t dl" style="left:563px;top:309px">Věty</div>
<div class="a cb" style="left:612px;top:308px"><svg class="a" style="left:2px;top:2px" width="9" height="9" viewBox="0 0 9 9"><path d="M0.5 3.5L3 6L8 1" stroke="#000" stroke-width="1.8" fill="none"/></svg></div><div class="t dl" style="left:629px;top:309px">Text</div>
<div class="a cb" style="left:681px;top:308px"><svg class="a" style="left:2px;top:2px" width="9" height="9" viewBox="0 0 9 9"><path d="M0.5 3.5L3 6L8 1" stroke="#000" stroke-width="1.8" fill="none"/></svg></div><div class="t dl" style="left:698px;top:309px">Volné texty</div>
<!-- list -->
<div class="a" style="left:407px;top:338px;width:467px;height:397px;background:#fff;border-top:1px solid #a0a0a0;border-left:1px solid #a0a0a0;border-right:1px solid #fff;border-bottom:1px solid #fff"></div>
<div class="a" style="left:408px;top:339px;width:465px;height:395px;border-top:1px solid #696969;border-left:1px solid #696969;border-right:1px solid #e3e3e3;border-bottom:1px solid #e3e3e3"></div>
<div class="a hd" style="left:409px;top:340px;width:64px">Datum</div>
<div class="a hd" style="left:473px;top:340px;width:55px">Čas</div>
<div class="a hd" style="left:528px;top:340px;width:158px">Snímek</div>
<div class="a hd" style="left:686px;top:340px;width:49px">Známka</div>
<div class="a hd" style="left:735px;top:340px;width:53px">Rychlost</div>
<div class="a hd" style="left:788px;top:340px;width:68px">Chybovost</div>
<div class="a" style="left:856px;top:340px;width:17px;height:394px;background:#f0f0f0"></div>
<div class="a" style="left:857px;top:357px;width:15px;height:64px;background:#cdcdcd"></div>
<svg class="a" style="left:859px;top:345px" width="10" height="7" viewBox="0 0 10 7"><path d="M1.5 5.5L5 2L8.5 5.5" stroke="#606060" stroke-width="1.6" fill="none"/></svg>
<svg class="a" style="left:859px;top:722px" width="10" height="7" viewBox="0 0 10 7"><path d="M1.5 1.5L5 5L8.5 1.5" stroke="#606060" stroke-width="1.6" fill="none"/></svg>

<div class="row" style="top:357px"><span style="left:413px">2024-01-29</span><span style="left:479px">10:16:36</span><span style="left:534px;word-spacing:-1px">Lekce 34 - Věty - Snímek 1/1</span><span style="left:692px">4</span><span style="left:741px">136</span><span style="left:793px">2.25</span></div>
<div class="row" style="top:371px"><span style="left:413px">2024-01-29</span><span style="left:479px">10:14:22</span><span style="left:534px;word-spacing:-1px">Lekce 34 - Slova - Snímek 2/2</span><span style="left:692px">5</span><span style="left:741px">139</span><span style="left:793px">2.63</span></div>
<div class="row" style="top:385px"><span style="left:413px">2024-01-29</span><span style="left:479px">10:12:53</span><span style="left:534px;word-spacing:-1px">Lekce 34 - Slova - Snímek 1/2</span><span style="left:692px">4</span><span style="left:741px">166</span><span style="left:793px">1.92</span></div>
<div class="row" style="top:399px"><span style="left:413px">2024-01-29</span><span style="left:479px">10:11:41</span><span style="left:534px;word-spacing:-1px">Lekce 34 - Hmaty - Snímek 8/8</span><span style="left:692px">3</span><span style="left:741px">216</span><span style="left:793px">1.21</span></div>
<div class="row" style="top:413px"><span style="left:413px">2024-01-29</span><span style="left:479px">10:07:18</span><span style="left:534px;word-spacing:-1px">Lekce 34 - Hmaty - Snímek 8/8</span><span style="left:692px">4</span><span style="left:741px">157</span><span style="left:793px">2.06</span></div>
<div class="row" style="top:427px"><span style="left:413px">2024-01-29</span><span style="left:479px">10:05:48</span><span style="left:534px;word-spacing:-1px">Lekce 34 - Hmaty - Snímek 7/8</span><span style="left:692px">1</span><span style="left:741px">257</span><span style="left:793px">0.00</span></div>
<div class="row" style="top:441px"><span style="left:413px">2024-01-29</span><span style="left:479px">10:05:17</span><span style="left:534px;word-spacing:-1px">Lekce 34 - Hmaty - Snímek 7/8</span><span style="left:692px">5</span><span style="left:741px">166</span><span style="left:793px">2.47</span></div>
<div class="row" style="top:455px"><span style="left:413px">2024-01-29</span><span style="left:479px">10:04:49</span><span style="left:534px;word-spacing:-1px">Lekce 34 - Hmaty - Snímek 6/8</span><span style="left:692px">4</span><span style="left:741px">127</span><span style="left:793px">2.39</span></div>
<div class="row" style="top:469px"><span style="left:413px">2024-01-23</span><span style="left:479px">08:50:20</span><span style="left:534px;word-spacing:-1px">Lekce 32 - Věty - Snímek 1/1</span><span style="left:692px">4</span><span style="left:741px">131</span><span style="left:793px">1.83</span></div>
<div class="row" style="top:483px"><span style="left:413px">2024-01-22</span><span style="left:479px">10:06:52</span><span style="left:534px;word-spacing:-1px">Lekce 31 - Text - Snímek 1/1</span><span style="left:692px">4</span><span style="left:741px">143</span><span style="left:793px">2.14</span></div>
<div class="row" style="top:497px"><span style="left:413px">2024-01-15</span><span style="left:479px">10:20:13</span><span style="left:534px;word-spacing:-1px">Lekce 30 - Hmaty - Snímek 3/8</span><span style="left:692px">1</span><span style="left:741px">471</span><span style="left:793px">0.00</span></div>
<div class="row" style="top:511px"><span style="left:413px">2024-01-15</span><span style="left:479px">10:19:32</span><span style="left:534px;word-spacing:-1px">Lekce 30 - Hmaty - Snímek 3/8</span><span style="left:692px">1</span><span style="left:741px">485</span><span style="left:793px">0.00</span></div>
<div class="row" style="top:525px"><span style="left:413px">2024-01-15</span><span style="left:479px">10:19:10</span><span style="left:534px;word-spacing:-1px">Lekce 30 - Hmaty - Snímek 3/8</span><span style="left:692px">1</span><span style="left:741px">498</span><span style="left:793px">0.00</span></div>
<div class="row" style="top:539px"><span style="left:413px">2024-01-15</span><span style="left:479px">10:16:53</span><span style="left:534px;word-spacing:-1px">Lekce 28 - Text - Snímek 1/1</span><span style="left:692px">4</span><span style="left:741px">191</span><span style="left:793px">1.72</span></div>
<div class="row" style="top:553px"><span style="left:413px">2024-01-15</span><span style="left:479px">10:10:14</span><span style="left:534px;word-spacing:-1px">Lekce 24 - Text - Snímek 1/1</span><span style="left:692px">3</span><span style="left:741px">195</span><span style="left:793px">1.51</span></div>
<div class="row" style="top:567px"><span style="left:413px">2024-01-15</span><span style="left:479px">10:03:12</span><span style="left:534px;word-spacing:-1px">Lekce 21 - Text - Snímek 1/1</span><span style="left:692px">2</span><span style="left:741px">234</span><span style="left:793px">0.60</span></div>
<div class="row" style="top:581px"><span style="left:413px">2023-12-11</span><span style="left:479px">10:17:49</span><span style="left:534px;word-spacing:-1px">Lekce 24 - Text - Snímek 1/1</span><span style="left:692px">3</span><span style="left:741px">232</span><span style="left:793px">1.47</span></div>
<div class="row" style="top:595px"><span style="left:413px">2023-12-11</span><span style="left:479px">10:13:41</span><span style="left:534px;word-spacing:-1px">Lekce 24 - Text - Snímek 1/1</span><span style="left:692px">3</span><span style="left:741px">211</span><span style="left:793px">1.59</span></div>
<div class="row" style="top:609px"><span style="left:413px">2023-12-11</span><span style="left:479px">10:05:26</span><span style="left:534px;word-spacing:-1px">Lekce 24 - Věty - Snímek 1/1</span><span style="left:692px">2</span><span style="left:741px">231</span><span style="left:793px">0.79</span></div>
<div class="row" style="top:623px"><span style="left:413px">2023-12-11</span><span style="left:479px">10:03:26</span><span style="left:534px;word-spacing:-1px">Lekce 24 - Věty - Snímek 1/1</span><span style="left:692px">3</span><span style="left:741px">215</span><span style="left:793px">1.43</span></div>
<div class="row" style="top:637px"><span style="left:413px">2023-12-04</span><span style="left:479px">10:37:25</span><span style="left:534px;word-spacing:-1px">Lekce 21 - Text - Snímek 1/1</span><span style="left:692px">2</span><span style="left:741px">227</span><span style="left:793px">0.71</span></div>
<div class="row" style="top:651px"><span style="left:413px">2023-12-04</span><span style="left:479px">10:32:43</span><span style="left:534px;word-spacing:-1px">Lekce 22 - Text - Snímek 1/1</span><span style="left:692px">3</span><span style="left:741px">188</span><span style="left:793px">1.30</span></div>
<div class="row" style="top:665px"><span style="left:413px">2023-12-04</span><span style="left:479px">10:31:07</span><span style="left:534px;word-spacing:-1px">Lekce 22 - Slova - Snímek 2/2</span><span style="left:692px">3</span><span style="left:741px">182</span><span style="left:793px">1.33</span></div>
<div class="row" style="top:679px"><span style="left:413px">2023-12-04</span><span style="left:479px">10:29:47</span><span style="left:534px;word-spacing:-1px">Lekce 22 - Slova - Snímek 1/2</span><span style="left:692px">4</span><span style="left:741px">163</span><span style="left:793px">1.65</span></div>
<div class="row" style="top:693px"><span style="left:413px">2023-12-04</span><span style="left:479px">10:27:56</span><span style="left:534px;word-spacing:-1px">Lekce 22 - Hmaty - Snímek 9/9</span><span style="left:692px">2</span><span style="left:741px">234</span><span style="left:793px">0.79</span></div>
<div class="row" style="top:707px"><span style="left:413px">2023-12-04</span><span style="left:479px">10:26:44</span><span style="left:534px;word-spacing:-1px">Lekce 22 - Hmaty - Snímek 8/9</span><span style="left:692px">3</span><span style="left:741px">188</span><span style="left:793px">1.19</span></div>
<div class="row" style="top:721px"><span style="left:413px">2023-12-04</span><span style="left:479px">10:26:16</span><span style="left:534px;word-spacing:-1px">Lekce 22 - Hmaty - Snímek 7/9</span><span style="left:692px">3</span><span style="left:741px">137</span><span style="left:793px">1.18</span></div>
</body></html>
